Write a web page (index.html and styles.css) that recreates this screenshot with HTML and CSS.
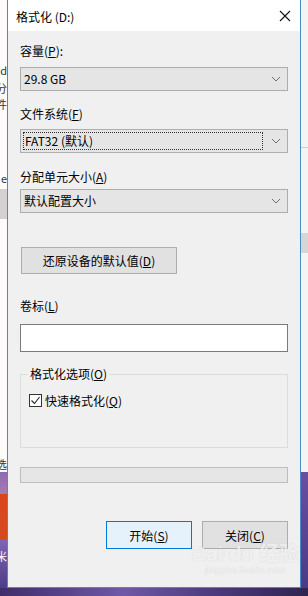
FILE: index.html
```html
<!DOCTYPE html>
<html lang="zh-CN">
<head>
    <meta charset="UTF-8">
    <title>格式化 (D:)</title>
    <link rel="stylesheet" href="styles.css">
</head>
<body>
    <div class="desktop">
        <div class="side side-left">
            <span class="frag f1">d</span>
            <span class="frag f2">分</span>
            <span class="frag f3">件</span>
            <span class="frag f4">e</span>
            <span class="frag f5">选</span>
            <span class="frag f6">米</span>
        </div>

        <div class="window">
            <div class="titlebar">
                <span class="title">格式化 (D:)</span>
                <svg class="close" width="12" height="12" viewBox="0 0 12 12">
                    <path d="M1 1 L11 11 M11 1 L1 11" stroke="#111" stroke-width="1.1" fill="none"/>
                </svg>
            </div>

            <div class="content">
                <div class="label l1">容量(<u>P</u>):</div>
                <div class="combo c1">
                    <span>29.8 GB</span>
                    <svg class="chev" width="10" height="6" viewBox="0 0 10 6"><path d="M1 1 L5 5 L9 1" stroke="#707070" fill="none"/></svg>
                </div>

                <div class="label l2">文件系统(<u>F</u>)</div>
                <div class="combo c2">
                    <span class="focus">FAT32 (默认)</span>
                    <svg class="chev" width="10" height="6" viewBox="0 0 10 6"><path d="M1 1 L5 5 L9 1" stroke="#707070" fill="none"/></svg>
                </div>

                <div class="label l3">分配单元大小(<u>A</u>)</div>
                <div class="combo c3">
                    <span>默认配置大小</span>
                    <svg class="chev" width="10" height="6" viewBox="0 0 10 6"><path d="M1 1 L5 5 L9 1" stroke="#707070" fill="none"/></svg>
                </div>

                <button class="btn restore">还原设备的默认值(<u>D</u>)</button>

                <div class="label l4">卷标(<u>L</u>)</div>
                <div class="textbox"></div>

                <fieldset class="group">
                    <legend>格式化选项(<u>O</u>)</legend>
                    <div class="check-row">
                        <span class="checkbox">
                            <svg width="11" height="11" viewBox="0 0 11 11"><path d="M1.5 5.5 L4.5 8.5 L9.5 2" stroke="#222" stroke-width="1.1" fill="none"/></svg>
                        </span>
                        <span>快速格式化(<u>Q</u>)</span>
                    </div>
                </fieldset>

                <div class="progress"></div>

                <div class="actions">
                    <button class="btn primary">开始(<u>S</u>)</button>
                    <button class="btn">关闭(<u>C</u>)</button>
                </div>

                <div class="watermark">
                    <div class="wm-logo">Bai<span class="paw">●</span>du 经验</div>
                    <div class="wm-url">jingyan.baidu.com</div>
                </div>
            </div>
        </div>

        <div class="side side-right">
            <div class="rline"></div>
            <div class="rblock"></div>
        </div>

        <div class="floor"></div>
    </div>
</body>
</html>
```

FILE: styles.css
```css
body {
    margin: 0;
    padding: 0;
    font-family: "Microsoft YaHei UI", "Noto Sans CJK SC", "Noto Sans", sans-serif;
    font-size: 12px;
    color: #000;
    background: #5a3f7e;
}
.desktop {
    display: grid;
    grid-template-columns: 7px 294px 7px;
    grid-template-rows: 588px 8px;
    width: 308px;
    height: 596px;
    overflow: hidden;
}
.side {
    position: relative;
    overflow: hidden;
}
.side-left {
    background: linear-gradient(to bottom,
        #fbfbfb 0, #fbfbfb 189px,
        #d2d2d2 189px, #d2d2d2 219px,
        #fbfbfb 219px, #fbfbfb 472px,
        #8a6cae 472px, #a77bb5 494px,
        #d9461b 494px, #d44a20 540px,
        #7d66b4 540px, #4d3c86 588px);
}
.frag {
    position: absolute;
    right: 0;
    font-size: 11px;
    line-height: 12px;
    color: #333;
}
.f1 { top: 64px; }
.f2 { top: 82px; }
.f3 { top: 98px; }
.f4 { top: 172px; }
.f5 { top: 458px; }
.f6 { top: 550px; color: #fff; }
.side-right {
    background: linear-gradient(to bottom, #f4f4f4 0, #f4f4f4 472px, #6a4fa0 472px, #4a3a86 588px);
}
.rline {
    margin-top: 147px;
    height: 1px;
    background: #cfcfcf;
}
.rblock {
    margin-top: 85px;
    height: 20px;
    background: #d6d6d6;
}
.floor {
    grid-column: 1 / 4;
    background: linear-gradient(to right, #3f2d6a, #6f58a8 40%, #4b3a7c 70%, #2f2450);
}

.window {
    display: flex;
    flex-direction: column;
    border-left: 1px solid #4a8ac9;
    border-right: 1px solid #4a8ac9;
    border-bottom: 1px solid #4a8ac9;
    background: #f0f0f0;
    position: relative;
}
.titlebar {
    height: 31px;
    background: #fff;
    display: flex;
    align-items: center;
    justify-content: space-between;
    padding: 0 9px 0 8px;
}
.title {
    font-size: 12px;
    margin-top: 1px;
}
.close {
    margin-top: 1px;
}
.content {
    flex: 1;
    display: flex;
    flex-direction: column;
    padding: 12px 12px 0 12px;
    position: relative;
}
.label {
    height: 16px;
    line-height: 16px;
}
.l2 { margin-top: 15px; }
.l3 { margin-top: 16px; }
.l4 { margin-top: 24px; }
.combo {
    height: 24px;
    box-sizing: border-box;
    border: 1px solid #adadad;
    background: #e5e5e5;
    display: flex;
    align-items: center;
    justify-content: space-between;
    padding: 0 6px 0 3px;
}
.c1 { margin-top: 8px; }
.c2 { margin-top: 7px; padding: 2px 2px 2px 2px; }
.c3 { margin-top: 4px; }
.combo span {
    line-height: 16px;
}
.focus {
    flex: 1;
    align-self: stretch;
    display: flex;
    align-items: center;
    border: 1px dotted #333;
    padding-left: 1px;
    margin-right: 8px;
}
.c2 .chev {
    margin-right: 4px;
}
.btn {
    font-family: inherit;
    font-size: 12px;
    color: #000;
    background: #e1e1e1;
    border: 1px solid #adadad;
    box-sizing: border-box;
    height: 28px;
    padding: 0;
    cursor: default;
}
.restore {
    margin-top: 34px;
    width: 156px;
    height: 27px;
    margin-left: 1px;
}
.textbox {
    margin-top: 10px;
    height: 28px;
    box-sizing: border-box;
    border: 1px solid #7a7a7a;
    background: #fff;
}
.group {
    margin: 15px 0 0 0;
    height: 81px;
    box-sizing: border-box;
    border: 1px solid #dcdcdc;
    padding: 4px 8px 0 8px;
}
.group legend {
    padding: 0 2px;
    margin-left: -1px;
    line-height: 14px;
}
.check-row {
    display: flex;
    align-items: center;
    gap: 3px;
    margin-top: 7px;
}
.checkbox {
    width: 13px;
    height: 13px;
    box-sizing: border-box;
    border: 1px solid #333;
    background: #fff;
    display: flex;
    align-items: center;
    justify-content: center;
}
.progress {
    margin-top: 19px;
    height: 16px;
    box-sizing: border-box;
    border: 1px solid #bcbcbc;
    background: #e6e6e6;
}
.actions {
    margin-top: 38px;
    display: flex;
    justify-content: flex-end;
    gap: 10px;
}
.actions .btn {
    width: 86px;
}
.btn.primary {
    background: #e5f1fb;
    border-color: #0078d7;
}
.watermark {
    position: absolute;
    left: 184px;
    top: 512px;
    color: rgba(255, 255, 255, 0.7);
    text-shadow: 0 0 1px rgba(170, 170, 170, 0.5);
    text-align: center;
    pointer-events: none;
}
.wm-logo {
    font-family: "Liberation Sans", "Noto Sans CJK SC", sans-serif;
    font-size: 20px;
    font-weight: bold;
    line-height: 22px;
}
.paw {
    font-size: 10px;
    vertical-align: top;
}
.wm-url {
    font-family: "Liberation Sans", sans-serif;
    font-size: 9px;
    line-height: 11px;
    letter-spacing: 0.5px;
}
u {
    text-underline-offset: 1px;
}
```
